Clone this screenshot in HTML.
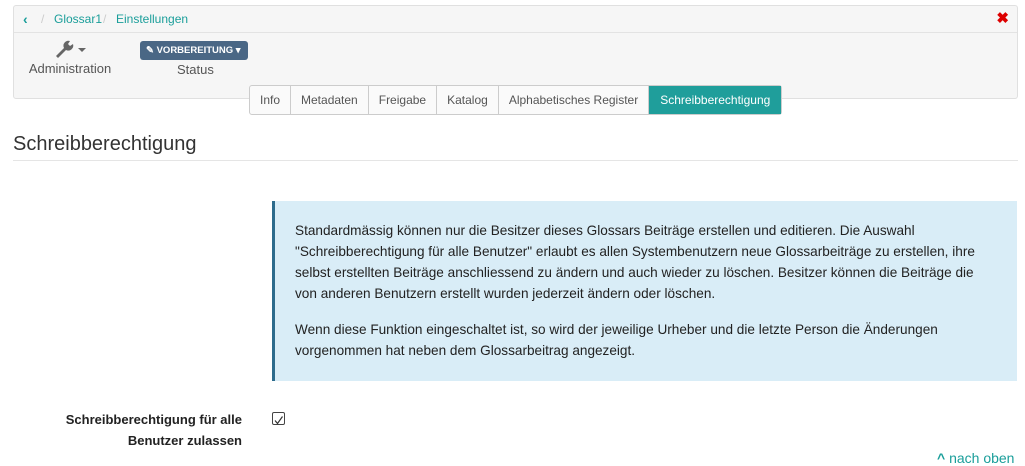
<!DOCTYPE html>
<html><head><meta charset="utf-8"><style>
*{box-sizing:border-box}
body{margin:0;width:1025px;height:462px;overflow:hidden;background:#fff;font-family:"Liberation Sans",sans-serif;color:#333;position:relative}
.panel{position:absolute;left:13px;top:5px;width:1005px;height:94px;background:#f6f6f6;border:1px solid #e0e0e0;border-radius:3px}
.bc{position:absolute;left:0;top:0;width:100%;height:27px;border-bottom:1px solid #e3e3e3;font-size:12px;line-height:26px;color:#1a9e9a}
.bc span{position:absolute}
.sep{color:#ccc}
.x{position:absolute;right:10px;top:3px;color:#d00;font-size:15px;font-weight:bold}
.tool{position:absolute;text-align:center;font-size:13px;color:#555}
.btn{position:absolute;left:126px;top:35px;width:108px;height:19px;background:#4a6785;border-radius:3px;color:#fff;font-size:9.5px;font-weight:bold;line-height:19px;padding-left:6px}
.tabs{position:absolute;left:249px;top:85px;height:30px;display:flex;border:1px solid #ccc;border-radius:3px;background:#fafafa;font-size:12px;color:#555}
.tabs div{padding:0 10px;line-height:29px;border-right:1px solid #ccc}
.tabs div.act{background:#1f9e9b;color:#fff;border:none;padding:0 11px}
h2{position:absolute;left:13px;top:133px;margin:0;font-weight:normal;font-size:20px;color:#333}
.hr{position:absolute;left:13px;top:160px;width:1005px;height:1px;background:#e5e5e5}
.info{position:absolute;left:272px;top:201px;width:745px;height:180px;background:#d9edf7;border-left:3px solid #2d6b8c;padding:19px 20px 0 20px;font-size:13.6px;line-height:21px;color:#222}
.info p{margin:0 0 15px}
.lbl{position:absolute;right:783px;top:409px;text-align:right;font-weight:bold;font-size:13px;line-height:21px;color:#222}
.cb{position:absolute;left:272px;top:412px;width:13px;height:13px;border:1px solid #444;border-radius:2px}
.top{position:absolute;left:937px;top:450px;font-size:14px;color:#1a9e9a}
</style></head><body>
<div class="panel">
 <div class="bc">
  <span style="left:9px;font-weight:bold;font-size:14px">&#8249;</span>
  <span class="sep" style="left:27px">/</span>
  <span style="left:40px">Glossar1</span>
  <span class="sep" style="left:89px">/</span>
  <span style="left:102px">Einstellungen</span>
  <span class="x" style="right:8px;top:0">✖</span>
 </div>
 <div class="tool" style="left:14px;top:33px;width:84px">
  <svg width="34" height="20" viewBox="0 0 34 20"><path d="M3 17 L11 9 A5 5 0 0 1 17 2 L15 5 L17 7 L20 5 A5 5 0 0 1 13 11 L5 19 Z" fill="#666"/><path d="M25 9 L33 9 L29 13Z" fill="#666"/></svg>
  <div style="margin-top:-1px">Administration</div>
 </div>
 <div class="btn">✎ VORBEREITUNG ▾</div>
 <div class="tool" style="left:163px;top:56px">Status</div>
</div>
<div class="tabs"><div>Info</div><div>Metadaten</div><div>Freigabe</div><div>Katalog</div><div>Alphabetisches Register</div><div class="act">Schreibberechtigung</div></div>
<h2>Schreibberechtigung</h2>
<div class="hr"></div>
<div class="info">
<p>Standardmässig können nur die Besitzer dieses Glossars Beiträge erstellen und editieren. Die Auswahl "Schreibberechtigung für alle Benutzer" erlaubt es allen Systembenutzern neue Glossarbeiträge zu erstellen, ihre selbst erstellten Beiträge anschliessend zu ändern und auch wieder zu löschen. Besitzer können die Beiträge die von anderen Benutzern erstellt wurden jederzeit ändern oder löschen.</p>
<p>Wenn diese Funktion eingeschaltet ist, so wird der jeweilige Urheber und die letzte Person die Änderungen vorgenommen hat neben dem Glossarbeitrag angezeigt.</p>
</div>
<div class="lbl">Schreibberechtigung für alle<br>Benutzer zulassen</div>
<div class="cb"><svg width="11" height="11" viewBox="0 0 11 11"><path d="M2 5.5 L4.5 8.5 L9.5 1.5" stroke="#333" fill="none" stroke-width="1.2"/></svg></div>
<div class="top"><b>^</b> nach oben</div>
</body></html>
